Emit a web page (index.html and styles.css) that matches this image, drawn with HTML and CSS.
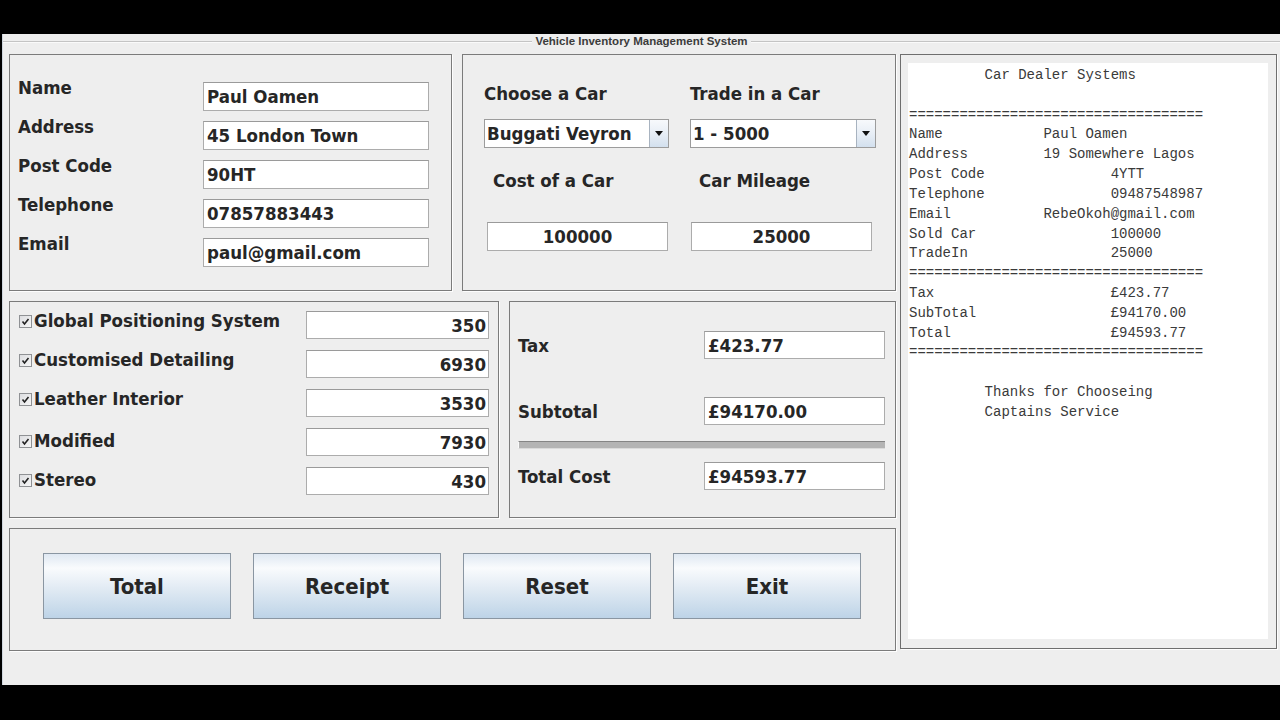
FILE: index.html
```html
<!DOCTYPE html>
<html>
<head>
<meta charset="utf-8">
<title>Vehicle Inventory Management System</title>
<link rel="stylesheet" href="styles.css">
</head>
<body>
<div class="screen">
  <div class="topbar"></div>
  <div class="window">
    <div class="titled">
      <span class="tline"></span>
      <span class="ttext">Vehicle Inventory Management System</span>
      <span class="tline"></span>
    </div>
    <div class="content">
      <div class="leftcol">
        <div class="row row1">
          <div class="panel customer">
            <div class="lbl">Name</div><div class="field">Paul Oamen</div>
            <div class="lbl">Address</div><div class="field">45 London Town</div>
            <div class="lbl">Post Code</div><div class="field">90HT</div>
            <div class="lbl">Telephone</div><div class="field">07857883443</div>
            <div class="lbl">Email</div><div class="field">paul@gmail.com</div>
          </div>
          <div class="panel car">
            <div class="carcol">
              <div class="lbl2">Choose a Car</div>
              <div class="combo"><span class="ctext">Buggati Veyron</span><span class="carrow"><svg width="8" height="5" viewBox="0 0 8 5"><path d="M0 0H8L4 5Z" fill="#111"/></svg></span></div>
              <div class="lbl2 ind">Cost of a Car</div>
              <div class="field center small">100000</div>
            </div>
            <div class="carcol second">
              <div class="lbl2">Trade in a Car</div>
              <div class="combo"><span class="ctext">1 - 5000</span><span class="carrow"><svg width="8" height="5" viewBox="0 0 8 5"><path d="M0 0H8L4 5Z" fill="#111"/></svg></span></div>
              <div class="lbl2 ind">Car Mileage</div>
              <div class="field center small">25000</div>
            </div>
          </div>
        </div>
        <div class="row row2">
          <div class="panel options">
            <div class="opt"><span class="cb"><svg width="9" height="9" viewBox="0 0 9 9"><path d="M1.5 4.5L3.5 7L7.5 2" stroke="#222" stroke-width="1.6" fill="none"/></svg></span>Global Positioning System</div><div class="field right">350</div>
            <div class="opt"><span class="cb"><svg width="9" height="9" viewBox="0 0 9 9"><path d="M1.5 4.5L3.5 7L7.5 2" stroke="#222" stroke-width="1.6" fill="none"/></svg></span>Customised Detailing</div><div class="field right">6930</div>
            <div class="opt"><span class="cb"><svg width="9" height="9" viewBox="0 0 9 9"><path d="M1.5 4.5L3.5 7L7.5 2" stroke="#222" stroke-width="1.6" fill="none"/></svg></span>Leather Interior</div><div class="field right">3530</div>
            <div class="opt lower"><span class="cb"><svg width="9" height="9" viewBox="0 0 9 9"><path d="M1.5 4.5L3.5 7L7.5 2" stroke="#222" stroke-width="1.6" fill="none"/></svg></span>Modified</div><div class="field right">7930</div>
            <div class="opt lower"><span class="cb"><svg width="9" height="9" viewBox="0 0 9 9"><path d="M1.5 4.5L3.5 7L7.5 2" stroke="#222" stroke-width="1.6" fill="none"/></svg></span>Stereo</div><div class="field right">430</div>
          </div>
          <div class="panel totals">
            <div class="trow tax"><span class="tlbl">Tax</span><div class="field">£423.77</div></div>
            <div class="trow sub"><span class="tlbl">Subtotal</span><div class="field">£94170.00</div></div>
            <div class="sep"></div>
            <div class="trow tot"><span class="tlbl">Total Cost</span><div class="field">£94593.77</div></div>
          </div>
        </div>
        <div class="panel buttons">
          <button class="btn">Total</button>
          <button class="btn">Receipt</button>
          <button class="btn">Reset</button>
          <button class="btn">Exit</button>
        </div>
      </div>
      <div class="panel receipt">
<pre class="paper">         Car Dealer Systems

===================================
Name            Paul Oamen
Address         19 Somewhere Lagos
Post Code               4YTT
Telephone               09487548987
Email           RebeOkoh@gmail.com
Sold Car                100000
TradeIn                 25000
===================================
Tax                     £423.77
SubTotal                £94170.00
Total                   £94593.77
===================================

         Thanks for Chooseing
         Captains Service</pre>
      </div>
    </div>
  </div>
  <div class="bottombar"></div>
</div>
</body>
</html>
```
FILE: styles.css
```css
* { box-sizing: border-box; }
html, body { margin: 0; padding: 0; background: #000; }
body { width: 1280px; height: 720px; overflow: hidden; }

.screen { width: 1280px; height: 720px; display: flex; flex-direction: column; }
.topbar { height: 34px; background: #000; flex: none; }
.bottombar { height: 35px; background: #000; flex: none; }

.window {
  height: 651px;
  flex: none;
  margin-left: 2px;
  border-left: 1px solid #cfd6de;
  background: #eeeeee;
  display: flex;
  flex-direction: column;
}

.titled { height: 14px; display: flex; align-items: center; flex: none; }
.tline { flex: 1; height: 2px; border-top: 1px solid #c4c4c4; border-bottom: 1px solid #fafafa; margin-top: 2px; }
.ttext {
  font-family: "Liberation Sans", Arial, sans-serif;
  font-weight: bold;
  font-size: 11.5px;
  color: #3c3c3c;
  padding: 0 3px;
}

.content {
  margin-top: 6px;
  padding-left: 6px;
  display: grid;
  grid-template-columns: 887px 377px;
  column-gap: 4px;
  align-items: start;
}

.leftcol { display: flex; flex-direction: column; gap: 10px; }
.row { display: flex; gap: 10px; }

.panel {
  border: 1px solid #7b7b7b;
  box-shadow: 1px 1px 0 #fdfdfd;
  background: #eeeeee;
}

.lbl, .lbl2, .field, .opt, .tlbl, .btn, .ctext {
  font-family: "DejaVu Sans Condensed", "DejaVu Sans", sans-serif;
  font-stretch: semi-condensed;
  font-weight: bold;
  color: #262626;
}

/* customer panel */
.customer {
  width: 443px;
  height: 237px;
  padding: 27px 0 0 8px;
  display: grid;
  grid-template-columns: 185px 226px;
  grid-auto-rows: 29px;
  row-gap: 10px;
}
.lbl { font-size: 18.5px; line-height: 20px; align-self: start; margin-top: -4px; }

.field {
  background: #fff;
  border: 1px solid #acacac;
  border-top-color: #9a9a9a;
  font-size: 18.5px;
  height: 29px;
  line-height: 27px;
  padding: 0 3px;
  white-space: nowrap;
  overflow: hidden;
}
.field.center { text-align: center; }
.field.right { text-align: right; }

/* car panel */
.car {
  width: 434px;
  height: 237px;
  padding: 28px 0 0 21px;
  display: flex;
  gap: 21px;
}
.carcol { width: 185px; display: flex; flex-direction: column; }
.carcol.second { width: 186px; }
.lbl2 { font-size: 18.5px; line-height: 22px; }
.lbl2.ind { padding-left: 9px; margin-top: 22px; }
.combo {
  margin-top: 14px;
  height: 29px;
  border: 1px solid #9c9c9c;
  background: #fff;
  display: flex;
  align-items: stretch;
}
.ctext { flex: 1; font-size: 18.5px; line-height: 27px; padding-left: 2px; white-space: nowrap; }
.carrow {
  width: 19px;
  border-left: 1px solid #a8b3c0;
  background: linear-gradient(#f7f9fc, #e6edf5 55%, #d3e0ee);
  display: flex;
  align-items: center;
  justify-content: center;
}
.car .field.small { margin-top: 30px; margin-left: 3px; width: 181px; }
.car .second .field.small { margin-left: 1px; }

/* options panel */
.options {
  width: 490px;
  height: 217px;
  padding: 9px 9px 0 9px;
  display: grid;
  grid-template-columns: 1fr 183px;
  grid-auto-rows: 28px;
  row-gap: 11px;
}
.options .field { height: 28px; line-height: 27px; padding-right: 2px; }
.opt {
  font-size: 18.5px;
  line-height: 22px;
  align-self: start;
  margin-top: -1px;
  display: flex;
  align-items: center;
  white-space: nowrap;
}
.opt.lower { margin-top: 2px; }
.cb {
  width: 13px;
  height: 13px;
  margin-right: 2px;
  border: 1px solid #8f9194;
  background: linear-gradient(135deg, #dcdde0, #f6f6f6);
  display: inline-flex;
  align-items: center;
  justify-content: center;
  flex: none;
}

/* totals panel */
.totals {
  width: 387px;
  height: 217px;
  padding: 29px 10px 0 8px;
  display: flex;
  flex-direction: column;
}
.trow { display: flex; align-items: center; justify-content: space-between; height: 28px; }
.trow .field { width: 181px; height: 28px; line-height: 27px; }
.tlbl { font-size: 18.5px; }
.trow.sub { margin-top: 38px; }
.sep {
  margin-top: 16px;
  height: 8px;
  background: #b4b4b4;
  border-top: 1px solid #858585;
  border-left: 1px solid #fafafa;
  border-bottom: 1px solid #dadada;
}
.trow.tot { margin-top: 13px; }

/* buttons panel */
.buttons {
  width: 887px;
  height: 123px;
  padding: 24px 34px 0 33px;
  display: flex;
  justify-content: space-between;
  align-items: flex-start;
}
.btn {
  width: 188px;
  height: 66px;
  border: 1px solid #8a96a2;
  border-radius: 0;
  background: linear-gradient(#dfe8f2 0%, #f9fbfd 22%, #e8eff6 45%, #c9dbeb 85%, #bdd3e7 100%);
  font-size: 22px;
  padding: 0;
  cursor: default;
}

/* receipt */
.receipt {
  height: 595px;
  padding: 8px 8px 9px 7px;
  border-color: #6e6e6e;
}
.paper {
  margin: 0;
  height: 100%;
  background: #fff;
  padding: 3px 0 0 1px;
  font-family: "Liberation Mono", "Courier New", monospace;
  font-size: 14px;
  line-height: 19.82px;
  color: #3a3a3a;
  overflow: hidden;
}
```
